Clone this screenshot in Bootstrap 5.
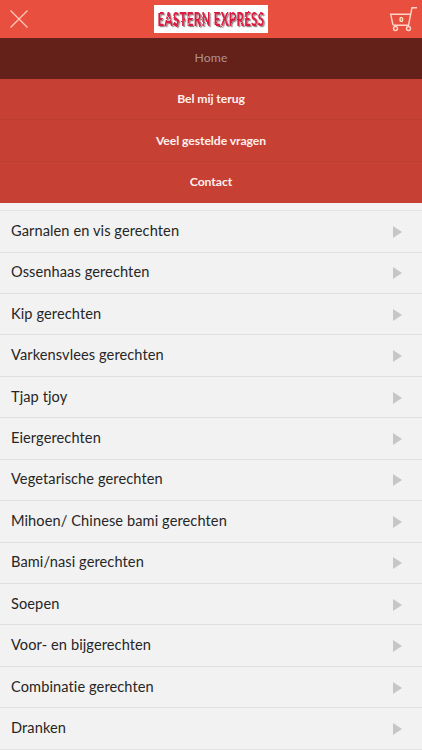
<!DOCTYPE html>
<html lang="nl">
<head>
<meta charset="utf-8">
<meta name="viewport" content="width=device-width, initial-scale=1">
<title>Eastern Express</title>
<link href="https://cdn.jsdelivr.net/npm/bootstrap@5.3.0/dist/css/bootstrap.min.css" rel="stylesheet">
<style>
body{font-family:Lato,"Open Sans",sans-serif;background:#f2f2f2;color:#262626;height:750px}
.topbar{height:37.5px;background:#e84f3e;padding:0 4px 0 9px}
.topbar svg{display:block}
.logo{margin-right:5px}
.main-menu a{height:41.4px;background:#c64033;color:#fff0ed;font-size:12.2px;letter-spacing:-.07px;font-weight:700;border-bottom:1px solid #bd3c30;padding-top:1px}
.main-menu a.current{background:repeating-conic-gradient(#69231d 0 25%,#5f1e18 0 50%) 0 0/2px 2px;color:#ae918e;font-weight:400;letter-spacing:.1px;border-color:#65201a}
.main-menu a:last-child{border-color:#c64033}
.strip{height:8px;border-bottom:1px solid #e4e4e4;background:#f4f2f2}
.dish{height:41.45px;border-bottom:1px solid #e0e0e0;padding:0 20px 1px 11px;font-size:14.6px;letter-spacing:.09px}
.dish svg{margin-top:2px}
.brand{font-family:Lato,sans-serif;font-weight:900;font-size:14px}
.count{font:bold 7.5px "Liberation Sans",sans-serif}
</style>
<script src="https://cdn.jsdelivr.net/npm/bootstrap@5.3.0/dist/js/bootstrap.bundle.min.js"></script>
</head>
<body class="overflow-hidden">
<header class="topbar d-flex align-items-center justify-content-between">
<svg width="30" height="37" viewBox="9 0 30 37"><path d="M10.5 10.5 27.5 27.5M27.5 10.5 10.5 27.5" stroke="#ffc9bb" stroke-width="1.2"/></svg>
<svg class="logo" width="114" height="28" viewBox="0 0 114 28"><defs><filter id="rough" x="-5%" y="-20%" width="110%" height="150%"><feTurbulence type="fractalNoise" baseFrequency=".3" numOctaves="1" seed="4"/><feDisplacementMap in="SourceGraphic" scale="2.5" xChannelSelector="R" yChannelSelector="G"/><feDropShadow dx="1.3" dy="1.2" stdDeviation=".2" flood-color="#665b60" flood-opacity=".7"/></filter></defs><path fill="#fff" d="M0 0h114v28H0z"/>
<g filter="url(#rough)"><text class="brand" transform="translate(3.5 20.5) scale(.82 1.3)" fill="#dc1f42" textLength="130" lengthAdjust="spacing">EASTERN EXPRESS</text></g></svg>
<svg width="30" height="37" viewBox="388 0 30 37" fill="none" stroke="#ffd5cb" stroke-width="1.4"><path d="M417 7.7h-5l-3.5 17.5H393.5M410.5 14.2H390.7l2.3 11"/><circle cx="395.5" cy="28.5" r="2"/><circle cx="408.5" cy="28.5" r="2"/><text class="count" x="401.3" y="22.4" text-anchor="middle" fill="#fff" stroke="none">0</text></svg>
</header>
<nav class="main-menu d-flex flex-column">
<a class="current d-flex align-items-center justify-content-center text-decoration-none" href="#">Home</a>
<a class="d-flex align-items-center justify-content-center text-decoration-none" href="#">Bel mij terug</a>
<a class="d-flex align-items-center justify-content-center text-decoration-none" href="#">Veel gestelde vragen</a>
<a class="d-flex align-items-center justify-content-center text-decoration-none" href="#">Contact</a>
</nav>
<div class="strip"></div>
<main id="dishes"></main>
<script>
document.getElementById('dishes').innerHTML=['Garnalen en vis gerechten','Ossenhaas gerechten','Kip gerechten','Varkensvlees gerechten','Tjap tjoy','Eiergerechten','Vegetarische gerechten','Mihoen/ Chinese bami gerechten','Bami/nasi gerechten','Soepen','Voor- en bijgerechten','Combinatie gerechten','Dranken'].map(t=>`<div class="dish d-flex align-items-center justify-content-between"><span>${t}</span><svg width="9" height="12" viewBox="0 0 9 12"><path d="M0 0 9 6 0 12z" fill="#c6c6c6"/></svg></div>`).join('');
</script>
</body>
</html>
